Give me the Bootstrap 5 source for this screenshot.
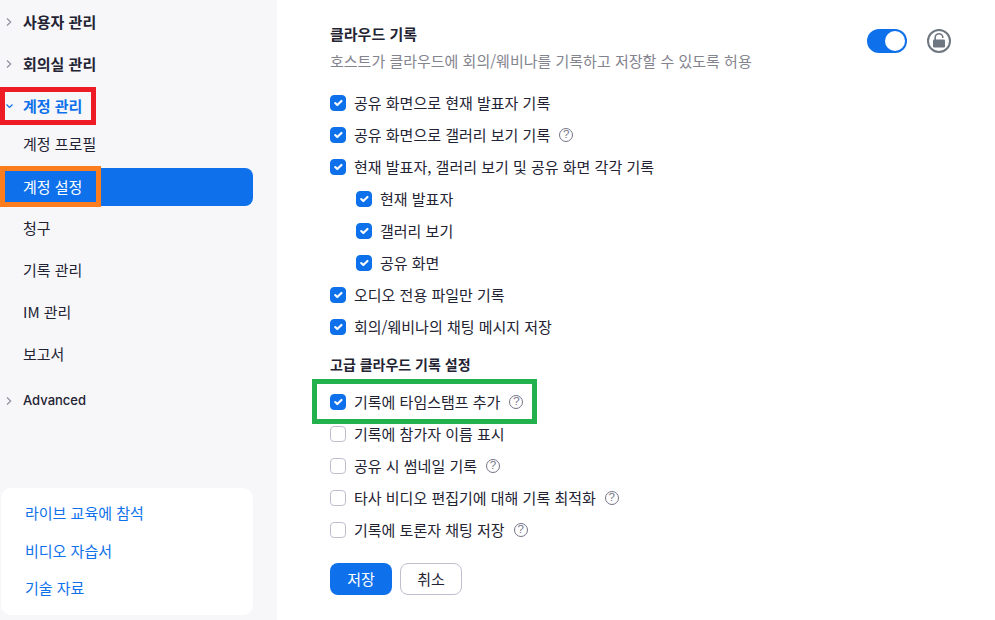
<!DOCTYPE html>
<html lang="ko">
<head>
    <meta charset="UTF-8">
    <title>계정 설정</title>
    <link href="https://cdn.jsdelivr.net/npm/bootstrap@5.3.3/dist/css/bootstrap.min.css" rel="stylesheet">
    <style>
        body { font-family: "Noto Sans CJK KR", "Inter", sans-serif; font-size: 15px; color: #232333; background: #fff; overflow: hidden; }
        .page-wrap { height: 620px; }
        .side-panel { width: 277px; height: 620px; background: #f7f7fa; padding-top: 1px; position: relative; flex-shrink: 0; }
        .side-head { height: 42px; padding-left: 6px; font-weight: 700; color: #232333; gap: 11px; }
        .side-head svg { width: 6px; height: 8px; flex-shrink: 0; }
        .side-head.open { color: #0e71eb; gap: 10px; }
        .side-head.open svg { width: 7px; height: 6px; }
        .side-head.plain { font-family: "Inter", sans-serif; font-weight: 500; font-size: 13px; margin-top: 2px; }
        .side-sub { margin-top: -1px; }
        .side-item { height: 38px; margin-bottom: 4px; padding: 0 0 2px 23px; width: 253px; color: #232333; text-decoration: none; }
        .side-item.active-item { background: #0e71eb; color: #fff; border-radius: 0 8px 8px 0; padding-bottom: 0; }
        .help-card { width: 252px; height: 127px; margin: auto 0 5px 1px; background: #fff; border-radius: 10px; padding: 6px 0 0 24px; }
        .help-card a { display: block; height: 37.5px; line-height: 37.5px; color: #0e71eb; text-decoration: none; }
        .main-pane { padding: 22px 44px 0 53px; position: relative; }
        .set-title { font-weight: 700; line-height: 24px; }
        .set-desc { color: #84848f; line-height: 24px; margin-top: 3px; }
        .set-ctrl { padding-top: 7px; }
        .toggle-pill { width: 40px; height: 24px; background: #0e71eb; border-radius: 12px; padding: 2px; justify-content: flex-end; }
        .toggle-pill i { display: block; width: 20px; height: 20px; background: #fff; border-radius: 50%; }
        .lock-ico { width: 24px; height: 24px; margin-left: 20px; }
        .opts-first { margin-top: 14px; }
        .opt-row { height: 32px; gap: 8px; }
        .opt-row.sub-row { padding-left: 26px; }
        .opt-row .form-check-input { width: 16px; height: 16px; margin: 0; border-radius: 4px; border: 1px solid #bfbfcf; flex-shrink: 0; }
        .opt-row .form-check-input:checked { background-color: #0e71eb; border-color: #0e71eb; }
        .opt-row label { color: #232333; }
        .q-mark { width: 14px; height: 14px; margin-left: 1px; border: 1.5px solid #747487; border-radius: 50%; color: #747487; font-size: 11.5px; line-height: 11px; text-align: center; font-family: "Liberation Sans", sans-serif; flex-shrink: 0; }
        .sec-head { font-weight: 700; font-size: 14px; line-height: 20px; margin: 11px 0 12px; }
        .btn-keep, .btn-undo { height: 32px; width: 62px; padding: 0; font-size: 15px; border-radius: 8px; }
        .btn-wrap { margin-top: 17px; }
        .btn-keep { background: #0e71eb; border: 0; color: #fff; }
        .btn-undo { background: #fff; border: 1px solid #bfbfcf; color: #232333; }
        .mark-box { position: absolute; border-style: solid; pointer-events: none; }
        .mark-red { left: 0; top: 87px; width: 96px; height: 38px; border-width: 5px; border-color: #ed1c24; }
        .mark-orange { left: 0; top: 166px; width: 101px; height: 41px; border-width: 5px; border-color: #fb7d1e; }
        .mark-green { left: 35px; top: 379px; width: 225px; height: 45px; border-width: 5px; border-color: #22b14c; }
    </style>
</head>
<body>
    <div class="page-wrap d-flex">

        <!-- 사이드바 -->
        <aside class="side-panel d-flex flex-column">
            <div class="side-head d-flex align-items-center">
                <svg viewBox="0 0 6 8"><path d="M1 .5 4.700 4 1 7.500" fill="none" stroke="#8f8fa0" stroke-width="1.200"/></svg>사용자 관리
            </div>
            <div class="side-head d-flex align-items-center">
                <svg viewBox="0 0 6 8"><path d="M1 .5 4.700 4 1 7.500" fill="none" stroke="#8f8fa0" stroke-width="1.200"/></svg>회의실 관리
            </div>
            <div class="side-head open d-flex align-items-center">
                <svg viewBox="0 0 7 6"><path d="M.5 1.500 3.500 4.500 6.500 1.500" fill="none" stroke="#0e71eb" stroke-width="1.200"/></svg>계정 관리
            </div>
            <div class="side-sub">
                <a class="side-item d-flex align-items-center" href="#">계정 프로필</a>
                <a class="side-item active-item d-flex align-items-center" href="#">계정 설정</a>
                <a class="side-item d-flex align-items-center" href="#">청구</a>
                <a class="side-item d-flex align-items-center" href="#">기록 관리</a>
                <a class="side-item d-flex align-items-center" href="#">IM 관리</a>
                <a class="side-item d-flex align-items-center" href="#">보고서</a>
            </div>
            <div class="side-head plain d-flex align-items-center">
                <svg viewBox="0 0 6 8"><path d="M1 .5 4.700 4 1 7.500" fill="none" stroke="#8f8fa0" stroke-width="1.200"/></svg>Advanced
            </div>
            <div class="help-card">
                <a href="#">라이브 교육에 참석</a>
                <a href="#">비디오 자습서</a>
                <a href="#">기술 자료</a>
            </div>
            <div class="mark-box mark-red"></div>
            <div class="mark-box mark-orange"></div>
        </aside>

        <!-- 설정 내용 -->
        <main class="main-pane flex-grow-1">
            <div class="d-flex justify-content-between">
                <div>
                    <div class="set-title">클라우드 기록</div>
                    <div class="set-desc">호스트가 클라우드에 회의/웨비나를 기록하고 저장할 수 있도록 허용</div>
                </div>
                <div class="set-ctrl d-flex align-items-start">
                    <div class="toggle-pill d-flex"><i></i></div>
                    <svg class="lock-ico" viewBox="0 0 24 24">
                        <circle cx="12" cy="12" r="11" fill="none" stroke="#6e7680" stroke-width="2"/>
                        <path d="M8.200 11V8.500a3.800 3.800 0 0 1 7.600 0V9" fill="none" stroke="#6e7680" stroke-width="1.600"/>
                        <rect x="6" y="10.500" width="12" height="8" rx="1.200" fill="#6e7680"/>
                    </svg>
                </div>
            </div>

            <div class="opts-first" id="opts-top"></div>

            <div class="sec-head">고급 클라우드 기록 설정</div>

            <div id="opts-bottom"></div>

            <div class="btn-wrap d-flex gap-2">
                <button class="btn btn-keep" type="button">저장</button>
                <button class="btn btn-undo" type="button">취소</button>
            </div>

            <div class="mark-box mark-green"></div>
        </main>
    </div>

    <script src="https://cdn.jsdelivr.net/npm/bootstrap@5.3.3/dist/js/bootstrap.bundle.min.js"></script>
    <script>
        // 체크박스 목록
        const topOpts = [
            { text: '공유 화면으로 현재 발표자 기록', on: true },
            { text: '공유 화면으로 갤러리 보기 기록', on: true, help: true },
            { text: '현재 발표자, 갤러리 보기 및 공유 화면 각각 기록', on: true },
            { text: '현재 발표자', on: true, sub: true },
            { text: '갤러리 보기', on: true, sub: true },
            { text: '공유 화면', on: true, sub: true },
            { text: '오디오 전용 파일만 기록', on: true },
            { text: '회의/웨비나의 채팅 메시지 저장', on: true }
        ];
        const bottomOpts = [
            { text: '기록에 타임스탬프 추가', on: true, help: true },
            { text: '기록에 참가자 이름 표시' },
            { text: '공유 시 썸네일 기록', help: true },
            { text: '타사 비디오 편집기에 대해 기록 최적화', help: true },
            { text: '기록에 토론자 채팅 저장', help: true }
        ];
        function fill(id, list) {
            const box = document.getElementById(id);
            list.forEach((o, i) => {
                const row = document.createElement('div');
                row.className = 'opt-row d-flex align-items-center' + (o.sub ? ' sub-row' : '');
                row.innerHTML = `
                    <input class="form-check-input" type="checkbox" id="${id}-${i}" ${o.on ? 'checked' : ''}>
                    <label for="${id}-${i}">${o.text}</label>
                    ${o.help ? '<span class="q-mark">?</span>' : ''}`;
                box.appendChild(row);
            });
        }
        fill('opts-top', topOpts);
        fill('opts-bottom', bottomOpts);
    </script>
</body>
</html>
